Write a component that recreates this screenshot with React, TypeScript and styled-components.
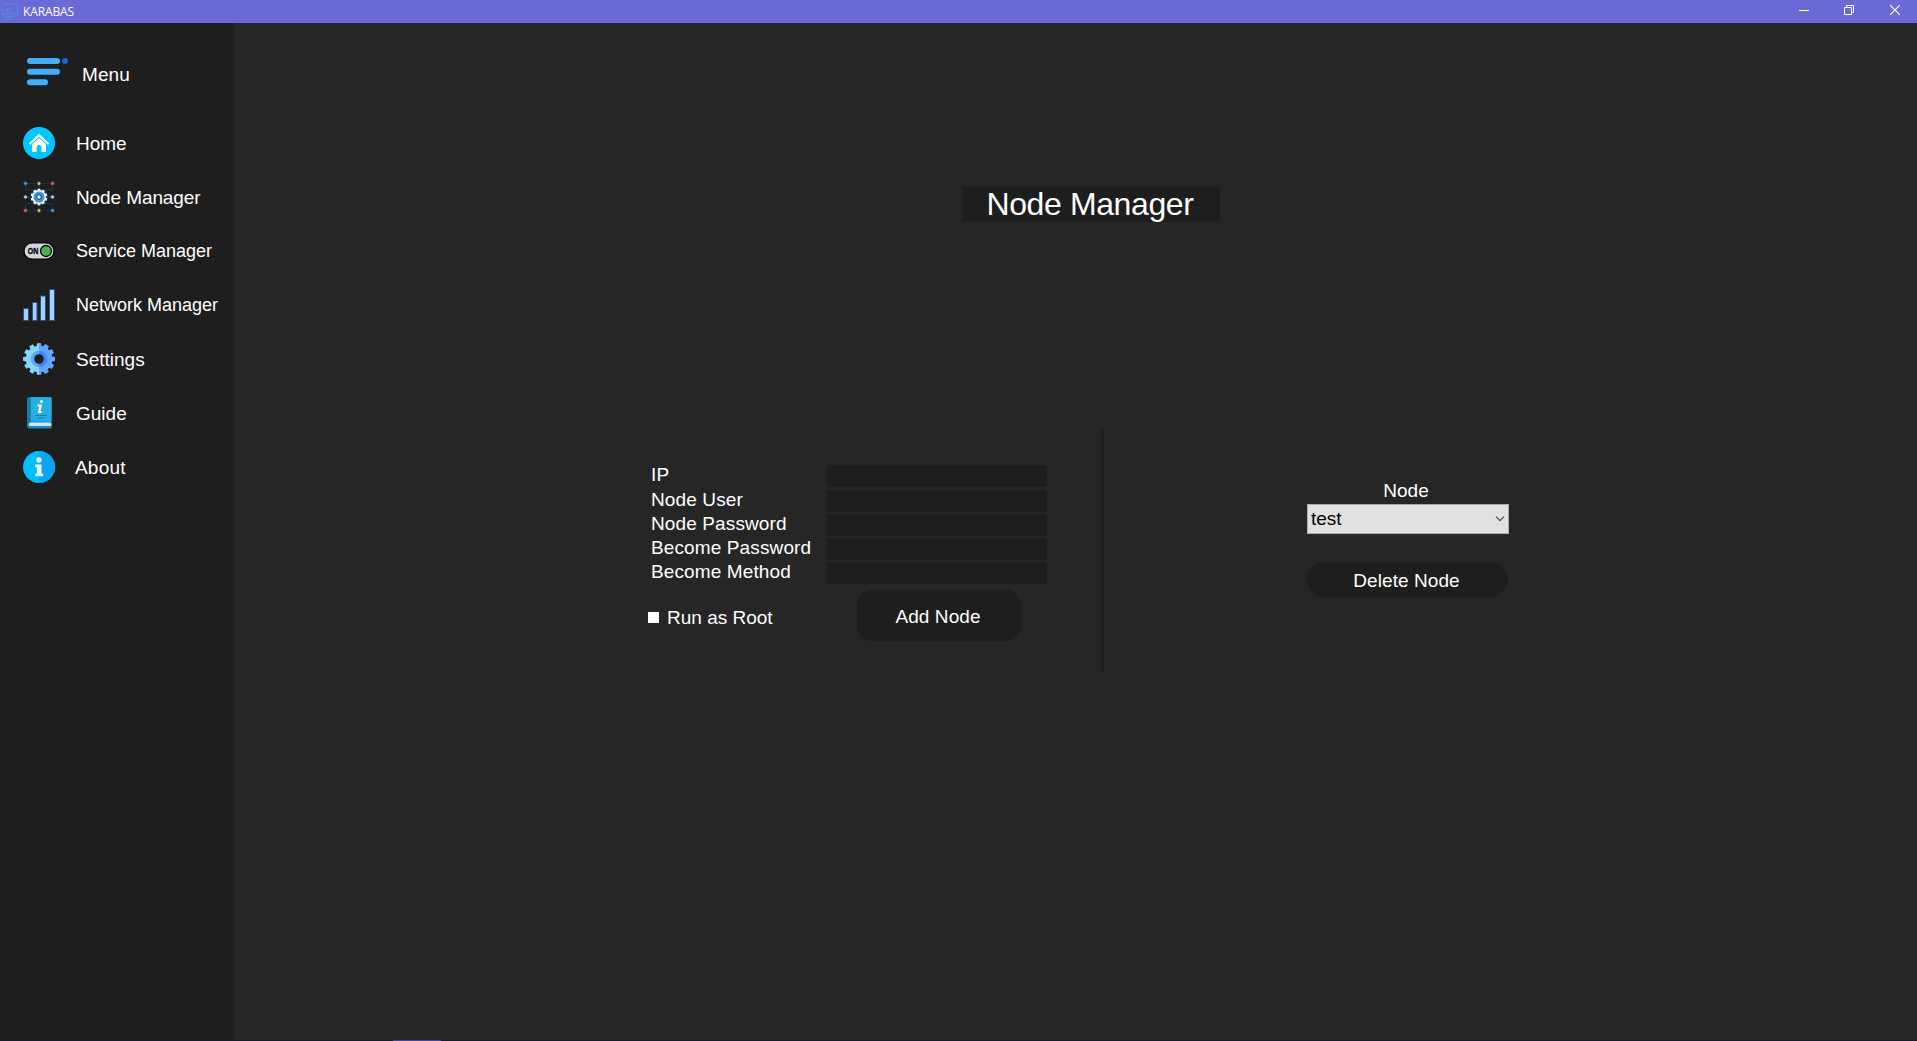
import React from 'react';
import styled, { createGlobalStyle } from 'styled-components';

const Global = createGlobalStyle`
  * { box-sizing: border-box; }
  html, body { margin: 0; padding: 0; }
  body {
    background: #262626;
    color: #fff;
    font-family: "Liberation Sans", Arial, sans-serif;
    font-size: 19px;
    overflow: hidden;
  }
`;

const Window = styled.div`
  display: flex;
  flex-direction: column;
  width: 1917px;
  height: 1041px;
`;

const TitleBar = styled.header`
  display: flex;
  flex: none;
  align-items: center;
  height: 23px;
  background: #6b69d6;
  padding-left: 2px;
`;

const AppName = styled.span`
  flex: 1;
  margin-left: 5px;
  font: 12px/22px "Open Sans", "Noto Sans", sans-serif;
  letter-spacing: -0.13px;
`;

const WindowButton = styled.span<{ $after: number }>`
  display: flex;
  align-self: flex-start;
  align-items: center;
  width: 10px;
  height: 20px;
  margin-right: ${p => p.$after}px;
`;

const Body = styled.div`
  display: flex;
  flex: 1;
`;

const Sidebar = styled.nav`
  width: 234px;
  background: #1e1e1e;
  padding-top: 31px;
`;

const MenuHeader = styled.div`
  display: flex;
  height: 62px;
  padding-left: 26px;
  gap: 13px;
`;

const NavItem = styled.a<{ $indent?: number }>`
  display: flex;
  align-items: center;
  height: 54px;
  padding-left: 23px;
  gap: ${p => p.$indent ?? 21}px;
`;

const Label = styled.span<{ $size?: number; $spacing?: number; $drop?: number }>`
  font-size: ${p => p.$size ?? 19}px;
  letter-spacing: ${p => p.$spacing ?? 0}px;
  line-height: 22px;
  padding-top: ${p => p.$drop ?? 0}px;
  white-space: nowrap;
`;

const Main = styled.main`
  flex: 1;
  display: flex;
  flex-direction: column;
  padding-top: 163px;
`;

const Heading = styled.h1`
  width: 258px;
  height: 36px;
  margin: 0 0 0 728px;
  padding-right: 2px;
  background: #1e1e1e;
  font-size: 32px;
  font-weight: 400;
  line-height: 36px;
  letter-spacing: -0.38px;
  text-align: center;
`;

const Panels = styled.section`
  display: flex;
  margin: 207px 0 0 412px;
  height: 243px;
`;

const AddForm = styled.div`
  width: 455px;
  padding-top: 36px;
`;

const Field = styled.label<{ $gap: number }>`
  display: flex;
  height: 22px;
  margin-bottom: ${p => p.$gap}px;
  padding-left: 5px;
`;

const FieldName = styled.span`
  width: 176px;
  line-height: 22px;
  margin-top: -1px;
  letter-spacing: 0.12px;
`;

const Input = styled.input`
  width: 220px;
  height: 22px;
  border: 0;
  padding: 0 4px;
  background: #1e1e1e;
  color: #fff;
  font: inherit;
  outline: none;
`;

const Actions = styled.div`
  display: flex;
  align-items: center;
  margin-top: 6px;
`;

const RootOption = styled.label`
  display: flex;
  align-items: center;
  width: 211px;
  gap: 8px;
  padding: 4px 0 0 2px;
`;

const CheckBox = styled.span`
  width: 11px;
  height: 11px;
  background: #fff;
`;

const Button = styled.button<{ $w: number; $h: number; $r: number }>`
  display: flex;
  align-items: center;
  justify-content: center;
  width: ${p => p.$w}px;
  height: ${p => p.$h}px;
  border: 0;
  border-radius: ${p => p.$r}px;
  padding: 2px 2px 0 0;
  background: #1e1e1e;
  color: #fff;
  font: inherit;
  letter-spacing: 0.08px;
`;

const Divider = styled.div`
  width: 3px;
  background: #1e1e1e;
`;

const RemoveForm = styled.div`
  display: flex;
  flex-direction: column;
  align-items: flex-start;
  margin-left: 203px;
  padding-top: 50px;
`;

const RemoveTitle = styled.div`
  width: 202px;
  height: 25px;
  padding-right: 4px;
  line-height: 24px;
  text-align: center;
`;

const Select = styled.div`
  display: flex;
  align-items: center;
  justify-content: space-between;
  width: 202px;
  height: 30px;
  margin-bottom: 28px;
  padding: 0 3px;
  border: 1px solid #adadad;
  background: #e1e1e1;
  color: #000;
`;

const Taskbar = styled.footer`
  flex: none;
  height: 1px;
  background: #1d1930;
  padding-left: 393px;
`;

const ActiveTask = styled.div`
  width: 48px;
  height: 1px;
  background: #45419a;
`;

const gearPath = (cx: number, cy: number, outer: number, inner: number, teeth: number) => {
  const pts: string[] = [];
  const step = (Math.PI * 2) / teeth;
  for (let i = 0; i < teeth; i++) {
    const a = i * step - Math.PI / 2;
    [[-0.33, inner], [-0.24, outer], [0.24, outer], [0.33, inner]].forEach(([f, r]) => {
      pts.push(`${(cx + r * Math.cos(a + f * step)).toFixed(2)},${(cy + r * Math.sin(a + f * step)).toFixed(2)}`);
    });
  }
  return `M${pts.join('L')}Z`;
};

const AppIcon = () => (
  <svg width="16" height="17" viewBox="0 0 16 17" fill="none" stroke="#4a8fe0">
    <rect x="0.5" y="1" width="15" height="12" rx="1.5" />
    <path d="M1 10.5h14M6.5 13v2.5M9.5 13v2.5M4 16h8" />
    <path d="M4.5 7.500l2-1.500 2 .5 3-2.500" strokeWidth="2" strokeDasharray="2 1" />
  </svg>
);

const MenuIcon = () => (
  <svg width="43" height="34" viewBox="0 0 43 34">
    <g fill="#42adfb">
      <rect x="1" y="4" width="33" height="6" rx="3" />
      <rect x="1" y="14.7" width="33" height="6" rx="3" />
      <rect x="1" y="25.3" width="21" height="6" rx="3" />
    </g>
    <circle cx="39" cy="7" r="3" fill="#1866dc" />
  </svg>
);

const HomeIcon = () => (
  <svg width="32" height="32" viewBox="0 0 32 32">
    <circle cx="16" cy="16" r="16" fill="#00c8ff" />
    <path d="M6.500 17L16 8.200l9.500 8.800" fill="none" stroke="#fff" strokeWidth="2.2" />
    <path d="M9 17.500l7-6.400 7 6.400V25h-4.500v-4.500a2.500 2.500 0 0 0-5 0V25H9z" fill="#fff" />
  </svg>
);

const nodeDots: [number, number, string][] = [
  [2.5, 2.5, '#3498db'], [16, 2.5, '#f0b354'], [29.5, 2.5, '#e8574e'],
  [2.5, 16, '#c3d3e2'], [29.5, 16, '#c3d3e2'],
  [2.5, 29.5, '#e8574e'], [16, 29.5, '#f0b354'], [29.5, 29.5, '#3498db'],
];

const NodesIcon = () => (
  <svg width="32" height="32" viewBox="0 0 32 32">
    <path d="M2.500 4v5h27V4M2.500 28v-5.500h27V28M16 3v26M3 16h26" fill="none" stroke="#1b3450" />
    <path d="M6 2.500h7M19 2.500h7M6 29.500h7M19 29.500h7" stroke="#1b3450" strokeDasharray="3 1" />
    <circle cx="16" cy="16" r="8.800" fill="#19324b" />
    {nodeDots.map(([x, y, c]) => (
      <circle key={`${x}-${y}`} cx={x} cy={y} r="2" fill={c} stroke="#1b3450" strokeWidth="0.9" />
    ))}
    <path d={gearPath(16, 16, 8.4, 7, 10)} fill="#f4f8fb" />
    <circle cx="16" cy="16" r="5.500" fill="#3498db" />
    <circle cx="16" cy="16" r="2.300" fill="#f4f8fb" stroke="#19324b" strokeWidth="1" />
  </svg>
);

const SwitchIcon = () => (
  <svg width="32" height="32" viewBox="0 0 32 32">
    <rect x="1" y="8" width="30" height="16" rx="8" fill="#cfd8dc" stroke="#000" strokeWidth="1.2" />
    <circle cx="23" cy="16" r="5.500" fill="#4caf50" stroke="#000" strokeWidth="1.3" />
    <text
      x="4.8"
      y="19.2"
      fontFamily="Liberation Sans, sans-serif"
      fontSize="8.8"
      fontWeight="700"
      textLength="10.500"
      lengthAdjust="spacingAndGlyphs"
      stroke="#000"
      strokeWidth="0.3"
    >
      ON
    </text>
  </svg>
);

const SignalIcon = () => (
  <svg width="32" height="32" viewBox="0 0 32 32" fill="#a0d0ff" stroke="#2b5283">
    <rect x="0.5" y="19.5" width="5" height="12" />
    <rect x="9.5" y="13.5" width="4.5" height="18" />
    <rect x="17.5" y="7" width="5" height="24.5" />
    <rect x="26.5" y="0.5" width="5" height="31" />
  </svg>
);

const SettingsIcon = () => (
  <svg width="32" height="32" viewBox="0 0 32 32">
    <defs>
      <clipPath id="rightHalf"><rect x="16" width="16" height="32" /></clipPath>
    </defs>
    <path d={gearPath(16, 16, 16, 13.2, 12)} fill="#82d9ff" />
    <circle cx="16" cy="16" r="8.300" fill="#62a5ff" />
    <g clipPath="url(#rightHalf)">
      <path d={gearPath(16, 16, 16, 13.2, 12)} fill="#62a5ff" />
      <circle cx="16" cy="16" r="8.300" fill="#3f86fb" />
    </g>
    <circle cx="16" cy="16" r="4.800" fill="#1e1e1e" />
  </svg>
);

const GuideIcon = () => (
  <svg width="32" height="32" viewBox="0 0 32 32">
    <path d="M7 0h21.500v31.500H7a3 3 0 0 1-3-3V3a3 3 0 0 1 3-3z" fill="#1a8fbb" />
    <path d="M7.500 .3h21v24.200h-21z" fill="#23aee4" />
    <path d="M4 3a3 3 0 0 1 3.500-3v24.800Q5 25 4 28z" fill="#1f789e" />
    <rect x="6" y="25.5" width="22.5" height="3.6" rx="1.5" fill="#d5e3f3" />
    <circle cx="18.500" cy="4.500" r="1.500" fill="#fff" />
    <path d="M14.500 8.500h3.200l-1.500 6.500h2.500" fill="none" stroke="#fff" strokeWidth="2.2" />
    <path d="M12.500 18.500h11M14.500 21h6.500" stroke="#187da6" />
  </svg>
);

const InfoIcon = () => (
  <svg width="32" height="32" viewBox="0 0 32 32">
    <circle cx="16" cy="16" r="16" fill="#00bfff" />
    <path d="M16 0a16 16 0 0 1 0 32z" fill="#08a6f0" />
    <circle cx="16" cy="9" r="2.700" fill="#eaf7ff" />
    <path d="M12.300 13.500h6.200v9h1.700v2.700h-8v-2.700h1.700v-6.300h-1.600z" fill="#eaf7ff" />
  </svg>
);

const MinimizeIcon = () => (
  <svg width="10" height="10" viewBox="0 0 10 10"><path d="M0 5.500h10" stroke="#fff" /></svg>
);
const RestoreIcon = () => (
  <svg width="10" height="10" viewBox="0 0 10 10" fill="none" stroke="#fff">
    <path d="M.5 2.500h7v7h-7zM2.500 2.500v-2h7v7h-2" />
  </svg>
);
const CloseIcon = () => (
  <svg width="10" height="10" viewBox="0 0 10 10"><path d="M0 0l10 10M10 0L0 10" stroke="#fff" strokeWidth="1.2" /></svg>
);
const Chevron = () => (
  <svg width="10" height="6" viewBox="0 0 10 6"><path d="M1 .7l4 4 4-4" fill="none" stroke="#505050" strokeWidth="1.2" /></svg>
);

const navItems = [
  { name: 'Home', icon: <HomeIcon />, size: 19, spacing: 0, drop: 1 },
  { name: 'Node Manager', icon: <NodesIcon />, size: 19, spacing: -0.1, drop: 1 },
  { name: 'Service Manager', icon: <SwitchIcon />, size: 18, spacing: 0, drop: 0 },
  { name: 'Network Manager', icon: <SignalIcon />, size: 18, spacing: 0, drop: 0 },
  { name: 'Settings', icon: <SettingsIcon />, size: 19, spacing: 0, drop: 1 },
  { name: 'Guide', icon: <GuideIcon />, size: 19, spacing: 0, drop: 1 },
  { name: 'About', icon: <InfoIcon />, size: 19, spacing: 0.2, drop: 1, indent: 20 },
];

const fields = [
  { name: 'IP', gap: 3 },
  { name: 'Node User', gap: 2 },
  { name: 'Node Password', gap: 2 },
  { name: 'Become Password', gap: 2 },
  { name: 'Become Method', gap: 0 },
];

export default function App() {
  return (
    <Window>
      <Global />
      <TitleBar>
        <AppIcon />
        <AppName>KARABAS</AppName>
        <WindowButton $after={35}><MinimizeIcon /></WindowButton>
        <WindowButton $after={36}><RestoreIcon /></WindowButton>
        <WindowButton $after={17}><CloseIcon /></WindowButton>
      </TitleBar>
      <Body>
        <Sidebar>
          <MenuHeader>
            <MenuIcon />
            <Label $drop={10} $spacing={0.1}>Menu</Label>
          </MenuHeader>
          {navItems.map(item => (
            <NavItem key={item.name} $indent={item.indent}>
              {item.icon}
              <Label $size={item.size} $spacing={item.spacing} $drop={item.drop}>{item.name}</Label>
            </NavItem>
          ))}
        </Sidebar>
        <Main>
          <Heading>Node Manager</Heading>
          <Panels>
            <AddForm>
              {fields.map(f => (
                <Field key={f.name} $gap={f.gap}>
                  <FieldName>{f.name}</FieldName>
                  <Input />
                </Field>
              ))}
              <Actions>
                <RootOption><CheckBox />Run as Root</RootOption>
                <Button $w={164} $h={51} $r={15}>Add Node</Button>
              </Actions>
            </AddForm>
            <Divider />
            <RemoveForm>
              <RemoveTitle>Node</RemoveTitle>
              <Select>test<Chevron /></Select>
              <Button $w={201} $h={35} $r={17.5}>Delete Node</Button>
            </RemoveForm>
          </Panels>
        </Main>
      </Body>
      <Taskbar><ActiveTask /></Taskbar>
    </Window>
  );
}
